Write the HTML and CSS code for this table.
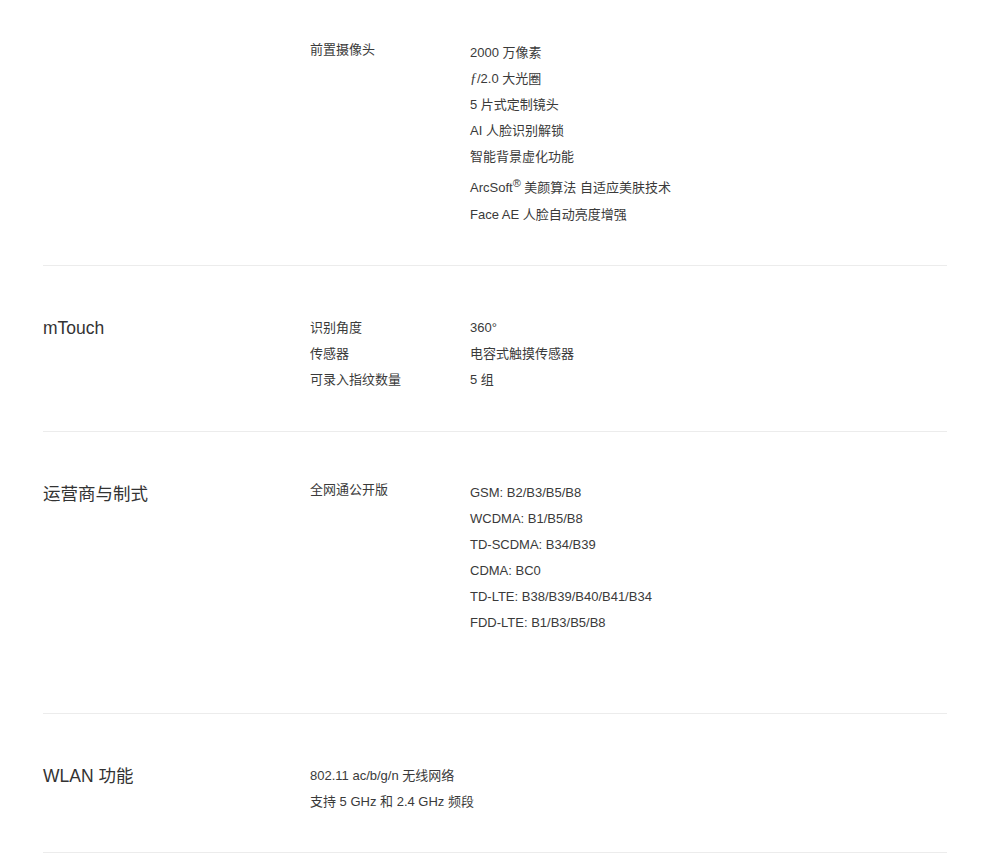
FILE: index.html
```html
<!DOCTYPE html>
<html lang="zh-CN">
<head>
    <meta charset="UTF-8">
    <meta name="viewport" content="width=device-width, initial-scale=1.0">
    <title>规格参数</title>
    <link rel="stylesheet" href="styles.css">
</head>
<body>
    <div class="specs">

        <!-- 前置摄像头 (section continues from above) -->
        <div class="spec-section first">
            <h3 class="spec-title"></h3>
            <div class="spec-body shifted">
                <div class="spec-row">
                    <div class="spec-label">前置摄像头</div>
                    <ul class="spec-values offset">
                        <li>2000 万像素</li>
                        <li><i class="fnum">ƒ</i>/2.0 大光圈</li>
                        <li>5 片式定制镜头</li>
                        <li>AI 人脸识别解锁</li>
                        <li>智能背景虚化功能</li>
                        <li class="with-sup">ArcSoft<sup>®</sup> 美颜算法 自适应美肤技术</li>
                        <li>Face AE 人脸自动亮度增强</li>
                    </ul>
                </div>
            </div>
        </div>

        <div class="spec-section">
            <h3 class="spec-title">mTouch</h3>
            <div class="spec-body">
                <div class="spec-row">
                    <div class="spec-label">识别角度</div>
                    <ul class="spec-values"><li>360°</li></ul>
                </div>
                <div class="spec-row">
                    <div class="spec-label">传感器</div>
                    <ul class="spec-values"><li>电容式触摸传感器</li></ul>
                </div>
                <div class="spec-row">
                    <div class="spec-label">可录入指纹数量</div>
                    <ul class="spec-values"><li>5 组</li></ul>
                </div>
            </div>
        </div>

        <div class="spec-section">
            <h3 class="spec-title">运营商与制式</h3>
            <div class="spec-body shifted">
                <div class="spec-row">
                    <div class="spec-label">全网通公开版</div>
                    <ul class="spec-values offset extra-space">
                        <li>GSM: B2/B3/B5/B8</li>
                        <li>WCDMA: B1/B5/B8</li>
                        <li>TD-SCDMA: B34/B39</li>
                        <li>CDMA: BC0</li>
                        <li>TD-LTE: B38/B39/B40/B41/B34</li>
                        <li>FDD-LTE: B1/B3/B5/B8</li>
                    </ul>
                </div>
            </div>
        </div>

        <div class="spec-section last">
            <h3 class="spec-title">WLAN 功能</h3>
            <div class="spec-body">
                <ul class="spec-values">
                    <li>802.11 ac/b/g/n 无线网络</li>
                    <li>支持 5 GHz 和 2.4 GHz 频段</li>
                </ul>
            </div>
        </div>

    </div>
</body>
</html>
```

FILE: styles.css
```css
body {
    margin: 0;
    background-color: #fff;
    font-family: "Liberation Sans", Arial, "Noto Sans CJK SC", sans-serif;
    color: #3a3a3a;
}
.specs {
    padding: 0 43px;
}
.spec-section {
    display: flex;
    padding: 49px 0 38px;
    border-bottom: 1px solid #ececec;
}
.spec-section.first {
    padding-top: 41px;
    padding-bottom: 37px;
}
.spec-section.last {
    padding-bottom: 37px;
}
.spec-title {
    width: 267px;
    flex-shrink: 0;
    margin: 0;
    font-size: 17.5px;
    font-weight: normal;
    line-height: 26px;
    color: #333;
}
.spec-body {
    flex: 1;
}
.spec-body.shifted {
    margin-top: -4px;
}
.spec-row {
    display: flex;
}
.spec-label {
    width: 160px;
    flex-shrink: 0;
    font-size: 13px;
    line-height: 26px;
}
.spec-values {
    list-style: none;
    margin: 0;
    padding: 0;
    font-size: 13px;
    line-height: 26px;
}
.spec-values.offset {
    padding-top: 3px;
}
.spec-values.extra-space {
    margin-bottom: 39px;
}
.spec-values .with-sup {
    padding: 5px 0 1px;
}
.spec-values sup {
    font-size: 11px;
    line-height: 0;
    vertical-align: 5px;
}
.fnum {
    font-family: "Liberation Serif", serif;
    font-size: 14px;
}
```
